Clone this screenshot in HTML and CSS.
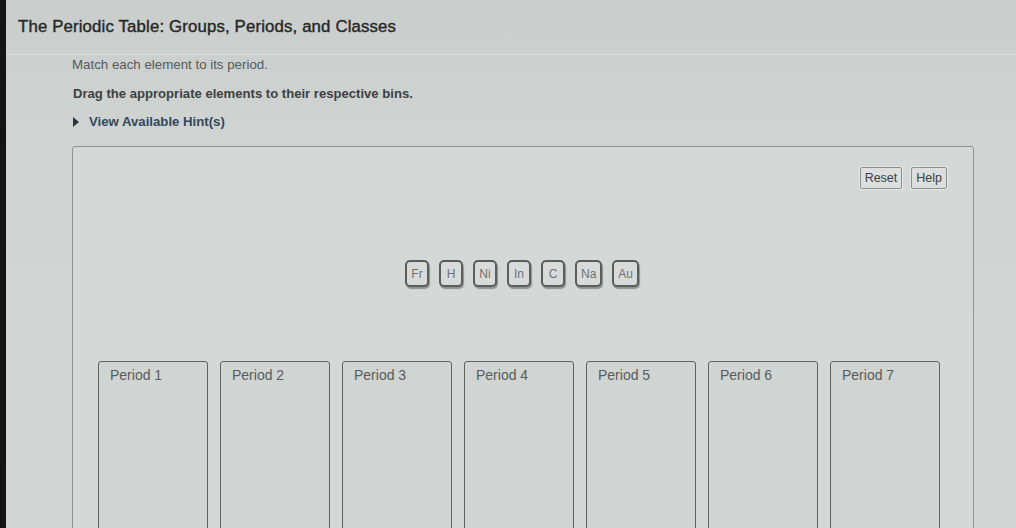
FILE: index.html
```html
<!DOCTYPE html>
<html>
<head>
<meta charset="utf-8">
<link rel="stylesheet" href="styles.css">
</head>
<body>
<div class="screen">
  <header class="header">
    <h1 class="title">The Periodic Table: Groups, Periods, and Classes</h1>
  </header>
  <main class="content">
    <p class="intro">Match each element to its period.</p>
    <p class="instr">Drag the appropriate elements to their respective bins.</p>
    <div class="hint"><span class="tri"></span><span>View Available Hint(s)</span></div>
    <section class="panel">
      <div class="toolbar">
        <button class="btn">Reset</button>
        <button class="btn">Help</button>
      </div>
      <div class="tiles">
        <span class="tile">Fr</span>
        <span class="tile">H</span>
        <span class="tile">Ni</span>
        <span class="tile">In</span>
        <span class="tile">C</span>
        <span class="tile">Na</span>
        <span class="tile">Au</span>
      </div>
      <div class="bins">
        <div class="bin">Period 1</div>
        <div class="bin">Period 2</div>
        <div class="bin">Period 3</div>
        <div class="bin">Period 4</div>
        <div class="bin">Period 5</div>
        <div class="bin">Period 6</div>
        <div class="bin">Period 7</div>
      </div>
    </section>
  </main>
</div>
</body>
</html>
```

FILE: styles.css
```css
html, body {
  margin: 0;
  padding: 0;
  height: 100%;
  overflow: hidden;
}
body {
  background: #cfd3d1;
  font-family: "Liberation Sans", Arial, sans-serif;
}
.screen {
  border-left: 6px solid #141414;
  height: 528px;
  box-sizing: border-box;
  background: linear-gradient(180deg, #c9cdcb 0%, #d0d4d2 30%, #d2d6d4 100%);
}
.header {
  height: 55px;
  border-bottom: 1px solid #dcdfdd;
  box-sizing: border-box;
  padding: 17px 0 0 12px;
}
.title {
  margin: 0;
  font-size: 16.8px;
  font-weight: normal;
  letter-spacing: 0.15px;
  -webkit-text-stroke: 0.4px #262828;
  color: #262828;
  line-height: 20px;
}
.content {
  padding: 2px 0 0 66px;
}
.intro {
  margin: 0;
  font-size: 13.3px;
  color: #555a5a;
  line-height: 16px;
}
.instr {
  margin: 13px 0 0 1px;
  font-size: 13.1px;
  font-weight: bold;
  color: #3d4141;
  line-height: 16px;
}
.hint {
  margin: 12px 0 0 1px;
  display: flex;
  align-items: center;
  gap: 10px;
  font-size: 13.2px;
  font-weight: bold;
  color: #34475c;
  line-height: 16px;
}
.tri {
  width: 0;
  height: 0;
  border-top: 5px solid transparent;
  border-bottom: 5px solid transparent;
  border-left: 6px solid #2c3440;
}
.panel {
  margin-top: 16px;
  width: 902px;
  height: 420px;
  border: 1px solid #8f9492;
  border-radius: 3px;
  box-sizing: border-box;
  background: #d4d8d6;
  padding: 20px 26px 0 24px;
}
.toolbar {
  display: flex;
  justify-content: flex-end;
  gap: 9px;
}
.btn {
  font-family: "Liberation Sans", Arial, sans-serif;
  font-size: 12.5px;
  color: #3a3e3e;
  background: #dcdfdd;
  border: 1px solid #8a8f8d;
  border-radius: 2px;
  padding: 2px 4px;
  height: 22px;
  box-shadow: 0 0 0 1px #e6e8e7;
}
.tiles {
  display: flex;
  justify-content: center;
  gap: 10px;
  margin-top: 71px;
}
.tile {
  display: inline-flex;
  align-items: center;
  justify-content: center;
  height: 23px;
  min-width: 12px;
  padding: 0 4px;
  border: 2px solid #5a5f5e;
  border-radius: 5px;
  background: #d8dbda;
  font-size: 12px;
  color: #6e7372;
  box-shadow: 1px 2px 1px #8e9392;
}
.bins {
  display: flex;
  gap: 12px;
  margin-top: 74px;
  padding-left: 1px;
}
.bin {
  width: 110px;
  height: 200px;
  box-sizing: border-box;
  border: 1px solid #5f6463;
  border-radius: 3px;
  padding: 5px 0 0 11px;
  font-size: 14px;
  color: #585c5c;
  background: #d0d4d2;
}
```
